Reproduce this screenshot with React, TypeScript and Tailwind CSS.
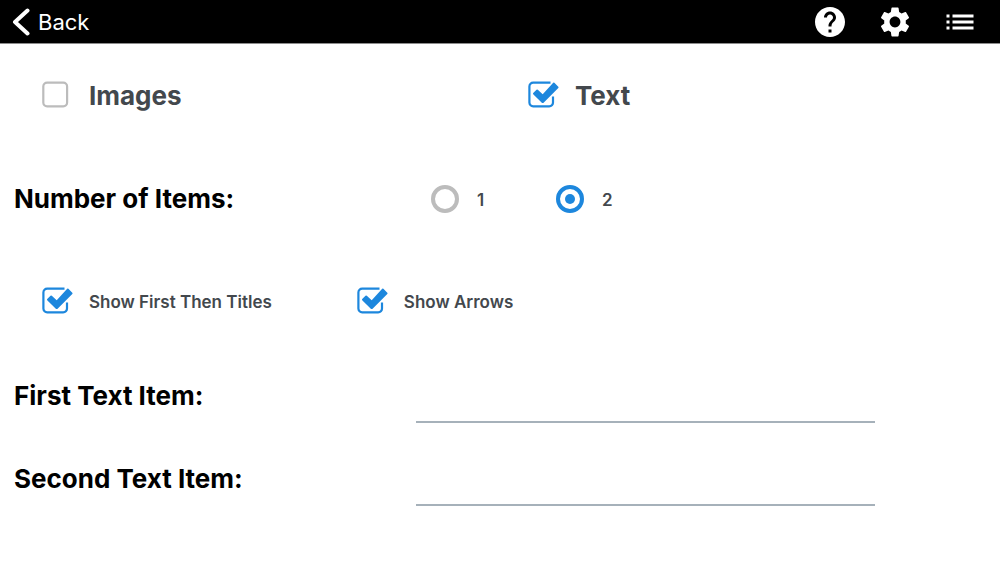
import { useState } from "react";
import type { ReactNode } from "react";
import { MdHelp, MdList, MdSettings } from "react-icons/md";
import { clsx } from "clsx";

const actions = [
  { label: "Help", icon: MdHelp },
  { label: "Settings", icon: MdSettings },
  { label: "List", icon: MdList },
];

type CheckOptionProps = {
  checked: boolean;
  onChange: (checked: boolean) => void;
  large?: boolean;
  children: ReactNode;
};

function CheckOption({ checked, onChange, large, children }: CheckOptionProps) {
  return (
    <label className="flex h-10 cursor-pointer items-center gap-4">
      <span className="relative h-7 w-[31px] shrink-0">
        <input
          type="checkbox"
          checked={checked}
          onChange={(event) => onChange(event.target.checked)}
          className="absolute inset-0 h-full w-full cursor-pointer appearance-none"
        />
        {checked ? (
          <svg viewBox="0 0 31 28" fill="none" className="pointer-events-none absolute inset-0 h-full w-full">
            <path
              d="M22.5 1.6H5.2A3.8 3.8 0 0 0 1.4 5.4V21.6A3.8 3.8 0 0 0 5.2 25.4H21.2A3.8 3.8 0 0 0 25 21.6V15.5"
              stroke="#1d87dd"
              strokeWidth="2.2"
            />
            <path
              d="M26.4 1.8 30.3 5.7Q30.9 6.3 30.3 6.9L15.6 21.7Q14.7 22.5 13.8 21.7L5.2 13.3Q4.7 12.7 5.2 12.1L8.5 8.7Q9.2 8.2 9.8 8.7L14.7 13.3 25.2 1.8Q25.8 1.3 26.4 1.8Z"
              fill="#1d87dd"
            />
          </svg>
        ) : (
          <svg viewBox="0 0 31 28" fill="none" className="pointer-events-none absolute inset-0 h-full w-full">
            <rect x="1.3" y="1.6" width="23.8" height="23.8" rx="3.8" stroke="#bcbcbc" strokeWidth="2.2" />
          </svg>
        )}
      </span>
      <span className={clsx("text-[#43484d]", large ? "text-[26px] font-bold" : "pt-[3px] text-[17px] font-semibold")}>
        {children}
      </span>
    </label>
  );
}

type RadioOptionProps = {
  value: number;
  selected: boolean;
  onSelect: (value: number) => void;
};

function RadioOption({ value, selected, onSelect }: RadioOptionProps) {
  return (
    <label className="flex h-10 w-[125px] cursor-pointer items-center gap-[18px]">
      <span className="relative flex h-7 w-7 items-center justify-center">
        <input
          type="radio"
          name="item-count"
          value={value}
          checked={selected}
          onChange={() => onSelect(value)}
          className="absolute inset-0 h-full w-full cursor-pointer appearance-none rounded-full border-4 border-[#bcbcbc] checked:border-[#1d87dd]"
        />
        {selected ? <span className="h-[10px] w-[10px] rounded-full bg-[#1d87dd]" /> : null}
      </span>
      <span className="pt-[3px] text-[17px] font-semibold text-[#43484d]">{value}</span>
    </label>
  );
}

function TextField({ id, label }: { id: string; label: string }) {
  return (
    <div className="flex h-[83px] items-start">
      <label htmlFor={id} className="w-[402px] shrink-0 text-[26px] leading-10 font-bold">
        {label}
      </label>
      <input
        id={id}
        type="text"
        className="mt-[7px] h-10 min-w-0 flex-1 border-b-2 border-[#a6b1ba] bg-transparent px-1 text-lg outline-none"
      />
    </div>
  );
}

export default function App() {
  const [images, setImages] = useState(false);
  const [text, setText] = useState(true);
  const [count, setCount] = useState(2);
  const [titles, setTitles] = useState(true);
  const [arrows, setArrows] = useState(true);

  return (
    <div className="min-h-screen bg-white font-['Inter',sans-serif] text-black">
      <header className="flex h-11 items-center justify-between border-b border-[#8c8c8c] bg-black pr-[22px] pl-3 text-white">
        <button type="button" className="flex cursor-pointer items-center gap-2">
          <svg viewBox="0 0 18 28" fill="none" className="h-7 w-[18px]">
            <path d="M15.5 2.5 3 14 15.5 25.5" stroke="currentColor" strokeWidth="4" strokeLinecap="round" strokeLinejoin="round" />
          </svg>
          <span className="text-[22px] leading-7">Back</span>
        </button>
        <div className="flex items-center gap-[29px]">
          {actions.map(({ label, icon: Icon }) => (
            <button key={label} type="button" aria-label={label} className="cursor-pointer">
              <Icon className="h-9 w-9" />
            </button>
          ))}
        </div>
      </header>

      <main className="flex flex-col pt-[31px]">
        <div className="grid grid-cols-2 gap-[14px] pl-[42px]">
          <CheckOption large checked={images} onChange={setImages}>
            Images
          </CheckOption>
          <CheckOption large checked={text} onChange={setText}>
            Text
          </CheckOption>
        </div>

        <fieldset className="mt-16 flex items-center px-[14px]" aria-labelledby="item-count-label">
          <span id="item-count-label" className="w-[417px] shrink-0 text-[26px] leading-10 font-bold">
            Number of Items:
          </span>
          {[1, 2].map((value) => (
            <RadioOption key={value} value={value} selected={count === value} onSelect={setCount} />
          ))}
        </fieldset>

        <div className="mt-[62px] flex gap-[85px] pl-[42px]">
          <CheckOption checked={titles} onChange={setTitles}>
            Show First Then Titles
          </CheckOption>
          <CheckOption checked={arrows} onChange={setArrows}>
            Show Arrows
          </CheckOption>
        </div>

        <div className="mt-[55px] pr-[125px] pl-[14px]">
          <TextField id="first-item" label="First Text Item:" />
          <TextField id="second-item" label="Second Text Item:" />
        </div>
      </main>
    </div>
  );
}
